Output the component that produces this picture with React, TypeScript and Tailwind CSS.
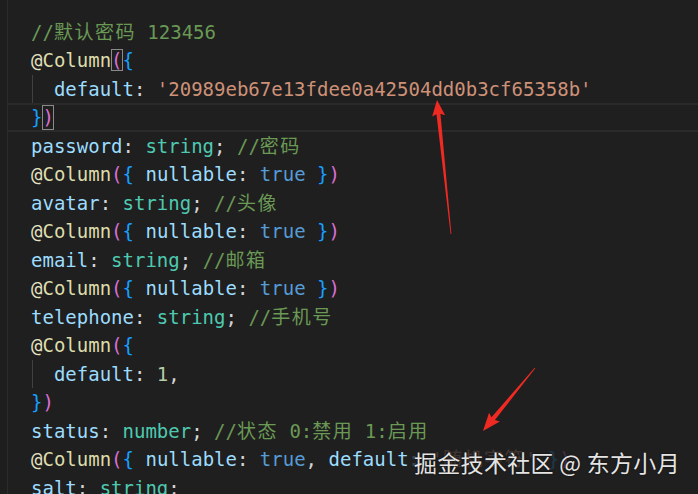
import React from "react";

// token colours (VS Code Dark+)
const prop = "text-[#9cdcfe]";
const type = "text-[#4ec9b0]";
const kw = "text-[#569cd6]";
const fn = "text-[#dcdcaa]";
const str = "text-[#ce9178]";
const num = "text-[#b5cea8]";
const cmt = "text-[#6a9955]";
const punc = "text-[#d4d4d4]";
const paren = "text-[#da70d6]";
const brace = "text-[#179fff]";

const Cjk: React.FC<{ children: React.ReactNode }> = ({ children }) => (
  <span className="tracking-[1.5px]">{children}</span>
);

const Line: React.FC<{ children?: React.ReactNode; active?: boolean; guide?: boolean }> = ({
  children,
  active,
  guide,
}) => (
  <div
    className={`relative h-[28.5px] whitespace-pre pl-[23px] ${
      active ? "border-y-2 border-[#2a2a2a] leading-[24.5px]" : "leading-[28.5px]"
    }`}
  >
    {guide && <div className="absolute left-[24px] top-0 h-full w-px bg-[#404040]" />}
    {children}
  </div>
);

const Deco: React.FC = () => (
  <>
    <span className="text-[#e8e3c4]">@</span>
    <span className={fn}>Column</span>
  </>
);

const Nullable: React.FC = () => (
  <Line>
    <Deco />
    <span className={paren}>(</span>
    <span className={brace}>{"{"}</span>
    <span className={prop}> nullable</span>
    <span className={punc}>: </span>
    <span className={kw}>true</span>
    <span className={brace}> {"}"}</span>
    <span className={paren}>)</span>
  </Line>
);

function arrowPoints(x1: number, y1: number, x2: number, y2: number, head: number, hw: number, sw: number) {
  const dx = x2 - x1;
  const dy = y2 - y1;
  const len = Math.hypot(dx, dy);
  const ux = dx / len;
  const uy = dy / len;
  const nx = -uy;
  const ny = ux;
  const bx = x2 - ux * head;
  const by = y2 - uy * head;
  const tw = 0.4;
  const pts = [
    [x1 + nx * tw, y1 + ny * tw],
    [bx + nx * sw, by + ny * sw],
    [bx + nx * hw - ux * 2, by + ny * hw - uy * 2],
    [x2, y2],
    [bx - nx * hw - ux * 2, by - ny * hw - uy * 2],
    [bx - nx * sw, by - ny * sw],
    [x1 - nx * tw, y1 - ny * tw],
  ];
  return pts.map((p) => p.join(",")).join(" ");
}

const App: React.FC = () => {
  return (
    <div className="relative w-[698px] h-[494px] overflow-hidden bg-[#1f1f1f] flex font-['DejaVu_Sans_Mono','Noto_Sans_CJK_SC',monospace] text-[19px]">
      <div className="w-2 shrink-0 border-r border-[#2b2b2b] bg-[#1e1e1e]" />
      <div className="flex-1 flex flex-col pt-[17.5px]">
        <Line>
          <span className={cmt}>
            //<Cjk>默认密码</Cjk> 123456
          </span>
        </Line>
        <Line>
          <Deco />
          <span className={`${paren} outline outline-1 outline-[#8a8a8a] -outline-offset-1 inline-block leading-[22px]`}>(</span>
          <span className={brace}>{"{"}</span>
        </Line>
        <Line guide>
          <span className={prop}>{"  default"}</span>
          <span className={punc}>: </span>
          <span className={str}>'20989eb67e13fdee0a42504dd0b3cf65358b'</span>
        </Line>
        <Line active>
          <span className={brace}>{"}"}</span>
          <span className={`${paren} outline outline-1 outline-[#8a8a8a] -outline-offset-1 inline-block leading-[24.5px]`}>)</span>
        </Line>
        <Line>
          <span className={prop}>password</span>
          <span className={punc}>: </span>
          <span className={type}>string</span>
          <span className={punc}>; </span>
          <span className={cmt}>
            //<Cjk>密码</Cjk>
          </span>
        </Line>
        <Nullable />
        <Line>
          <span className={prop}>avatar</span>
          <span className={punc}>: </span>
          <span className={type}>string</span>
          <span className={punc}>; </span>
          <span className={cmt}>
            //<Cjk>头像</Cjk>
          </span>
        </Line>
        <Nullable />
        <Line>
          <span className={prop}>email</span>
          <span className={punc}>: </span>
          <span className={type}>string</span>
          <span className={punc}>; </span>
          <span className={cmt}>
            //<Cjk>邮箱</Cjk>
          </span>
        </Line>
        <Nullable />
        <Line>
          <span className={prop}>telephone</span>
          <span className={punc}>: </span>
          <span className={type}>string</span>
          <span className={punc}>; </span>
          <span className={cmt}>
            //<Cjk>手机号</Cjk>
          </span>
        </Line>
        <Line>
          <Deco />
          <span className={paren}>(</span>
          <span className={brace}>{"{"}</span>
        </Line>
        <Line guide>
          <span className={prop}>{"  default"}</span>
          <span className={punc}>: </span>
          <span className={num}>1</span>
          <span className={punc}>,</span>
        </Line>
        <Line>
          <span className={brace}>{"}"}</span>
          <span className={paren}>)</span>
        </Line>
        <Line>
          <span className={prop}>status</span>
          <span className={punc}>: </span>
          <span className={type}>number</span>
          <span className={punc}>; </span>
          <span className={cmt}>
            //<Cjk>状态</Cjk> 0:<Cjk>禁用</Cjk> 1:<Cjk>启用</Cjk>
          </span>
        </Line>
        <Line>
          <Deco />
          <span className={paren}>(</span>
          <span className={brace}>{"{"}</span>
          <span className={prop}> nullable</span>
          <span className={punc}>: </span>
          <span className={kw}>true</span>
          <span className={punc}>, </span>
          <span className={prop}>default</span>
          <span className={punc}>: </span>
          <span className={str}>
            '<Cjk>随机字符</Cjk>'
          </span>
          <span className={brace}> {"}"}</span>
          <span className={paren}>)</span>
        </Line>
        <Line>
          <span className={prop}>salt</span>
          <span className={punc}>: </span>
          <span className={type}>string</span>
          <span className={punc}>;</span>
        </Line>
      </div>

      {/* annotation arrows */}
      <svg className="absolute inset-0 pointer-events-none" width={698} height={494}>
        <polygon points={arrowPoints(451, 234, 437, 100, 14, 6.5, 2)} fill="#ee2a22" />
        <polygon points={arrowPoints(535, 368, 483, 431, 16, 7, 2.2)} fill="#ee2a22" />
      </svg>

      {/* watermark */}
      <div className="absolute left-[413px] top-[446px] px-px text-[23px] leading-[32px] tracking-[0.3px] text-[#e4e4e4] bg-[#1f1f1f]/80 font-['Noto_Sans_CJK_SC',sans-serif] whitespace-pre [text-shadow:0_0_2px_rgba(0,0,0,0.7)]">
        掘金技术社区 @ 东方小月
      </div>
    </div>
  );
};

export default App;
